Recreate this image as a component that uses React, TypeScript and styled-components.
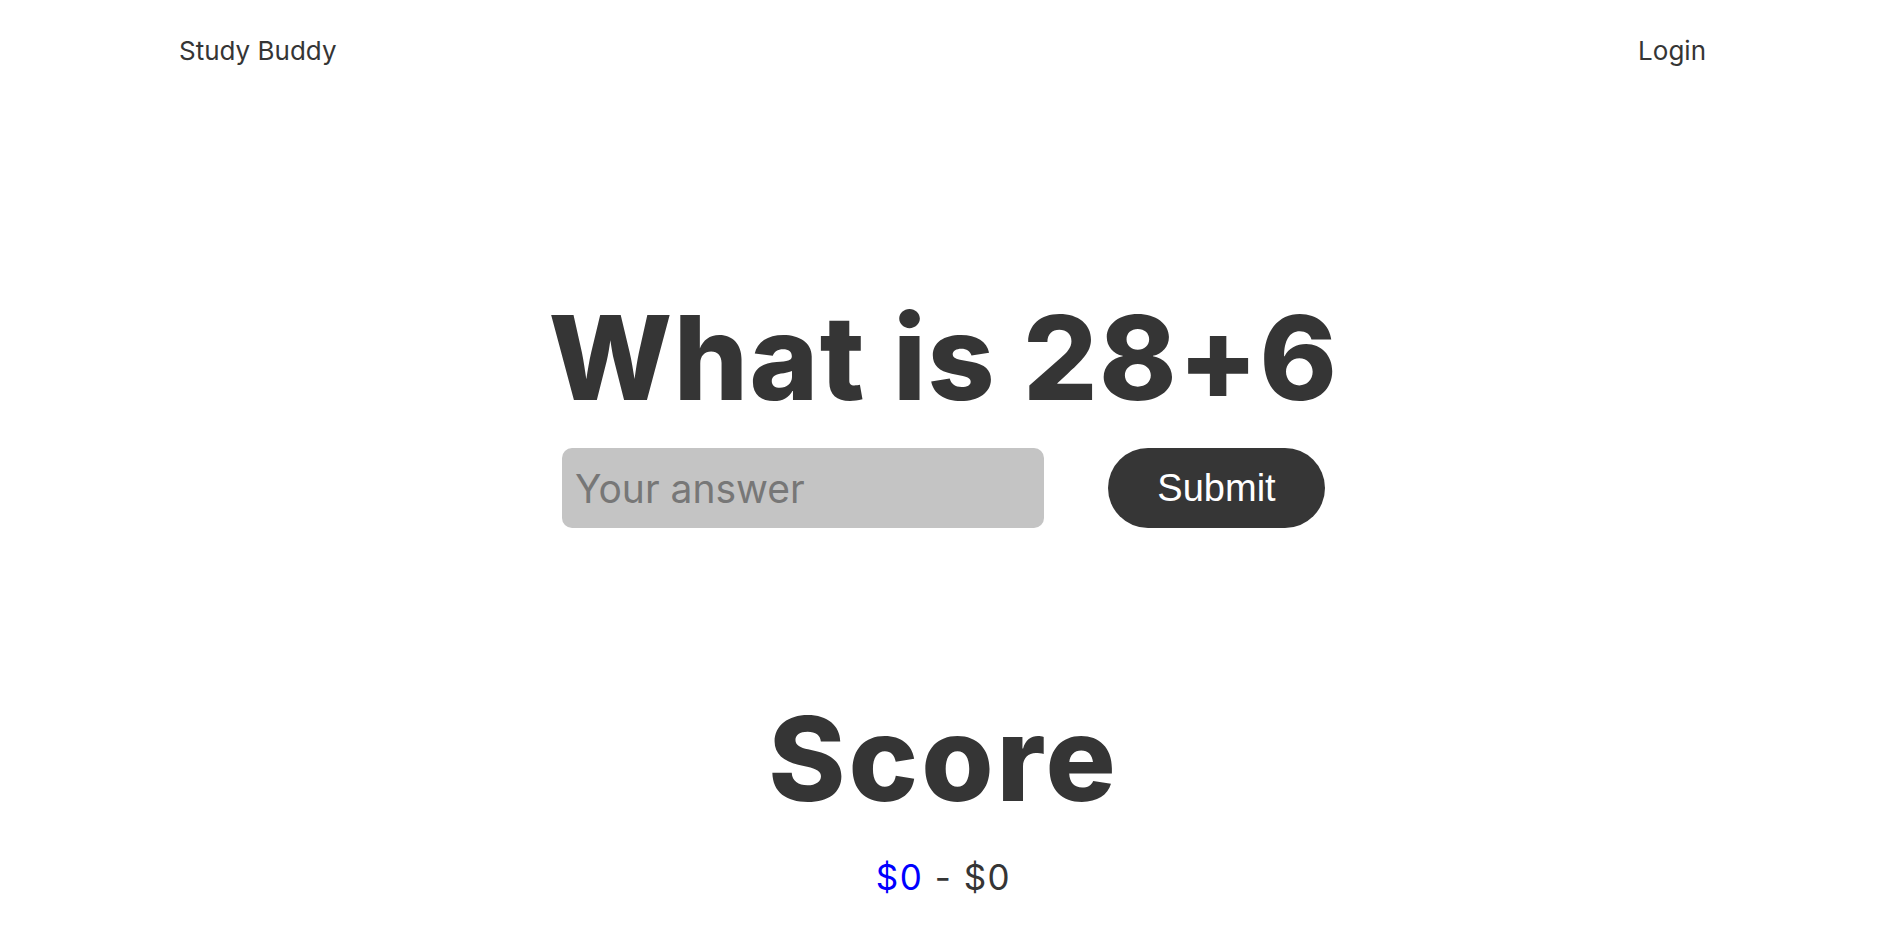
import styled, { createGlobalStyle } from "styled-components";

const GlobalStyle = createGlobalStyle`
  body {
    margin: 0;
    background: #ffffff;
    font-family: Inter, "Noto Sans", sans-serif;
    color: #353535;
  }
`;

const Page = styled.div`
  min-height: 926px;
  display: flex;
  flex-direction: column;
`;

const Nav = styled.nav`
  height: 100px;
  display: flex;
  align-items: center;
  justify-content: space-between;
  padding: 0 189px 0 179px;
`;

const NavLink = styled.a`
  font-size: 26px;
  font-weight: 400;
  color: #353535;
  text-decoration: none;
  cursor: pointer;
`;

const Main = styled.main`
  display: flex;
  flex-direction: column;
  align-items: center;
  padding-right: 8px;
`;

const Heading = styled.h1<{ $top: number; $spacing: number }>`
  margin: ${(p) => p.$top}px 0 0;
  font-size: 117px;
  line-height: 1;
  font-weight: 800;
  letter-spacing: ${(p) => p.$spacing}px;
  color: #353535;
`;

const AnswerForm = styled.form`
  display: flex;
  gap: 64px;
  margin-top: 32px;
`;

const AnswerInput = styled.input`
  box-sizing: border-box;
  width: 482px;
  height: 80px;
  border: none;
  border-radius: 10px;
  background: #c4c4c4;
  padding: 0 13px;
  font-family: Inter, "Noto Sans", sans-serif;
  font-size: 39px;
  color: #353535;
  outline: none;
  &::placeholder {
    color: #777777;
  }
`;

const SubmitButton = styled.button`
  width: 217px;
  height: 80px;
  border: none;
  border-radius: 40px;
  background: #363636;
  color: #ffffff;
  font-family: "Liberation Sans", Arial, sans-serif;
  font-size: 38px;
  cursor: pointer;
`;

const ScoreLine = styled.p`
  margin: 39px 0 0;
  font-size: 35px;
  letter-spacing: 1.5px;
  color: #353535;
`;

const Wins = styled.span`
  color: #0000ff;
`;

export default function App() {
  return (
    <Page>
      <GlobalStyle />
      <Nav>
        <NavLink>Study Buddy</NavLink>
        <NavLink>Login</NavLink>
      </Nav>
      <Main>
        <Heading $top={199} $spacing={1.4}>
          What is 28+6
        </Heading>
        <AnswerForm onSubmit={(e) => e.preventDefault()}>
          <AnswerInput type="text" placeholder="Your answer" />
          <SubmitButton type="submit">Submit</SubmitButton>
        </AnswerForm>
        <Heading $top={172} $spacing={3}>
          Score
        </Heading>
        <ScoreLine>
          <Wins>$0</Wins> - $0
        </ScoreLine>
      </Main>
    </Page>
  );
}
